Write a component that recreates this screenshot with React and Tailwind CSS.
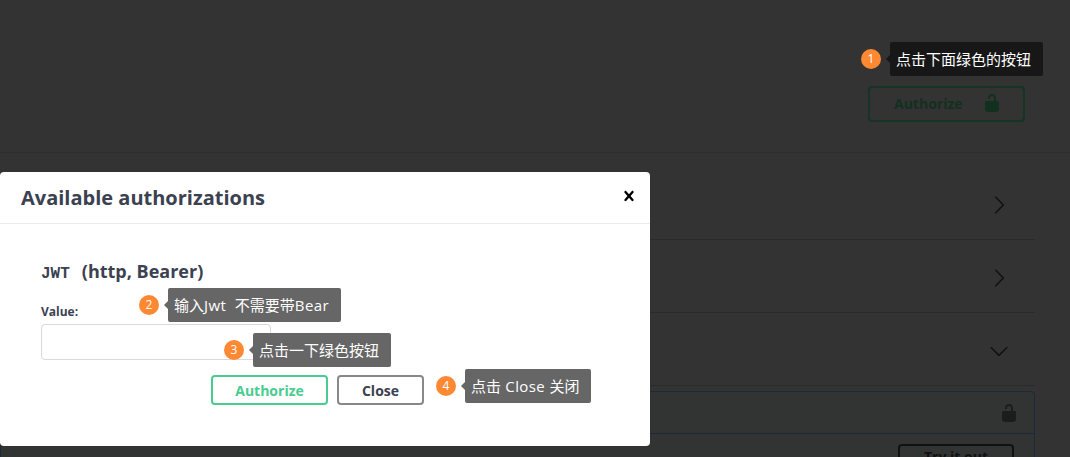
import React from 'react';

const LOCK = 'M15.8 8H14V5.6C14 2.703 12.665 1 10 1 7.334 1 6 2.703 6 5.6V6h2v-.801C8 3.754 8.797 3 10 3c1.203 0 2 .754 2 2.199V8H4c-.553 0-1 .646-1 1.199V17c0 .549.428 1.139.951 1.307l1.197.387C5.672 18.861 6.55 19 7.1 19h5.8c.549 0 1.428-.139 1.951-.307l1.196-.387c.524-.167.953-.757.953-1.306V9.199C17 8.646 16.352 8 15.8 8z';
const ARROW = 'M13.25 10L6.109 2.58c-.268-.27-.268-.707 0-.979.268-.27.701-.27.969 0l7.83 7.908c.268.271.268.709 0 .979l-7.83 7.908c-.268.271-.701.27-.969 0-.268-.269-.268-.707 0-.979L13.25 10z';
const CLOSE = 'M14.348 14.849c-.469.469-1.229.469-1.697 0L10 11.819l-2.651 3.029c-.469.469-1.229.469-1.697 0-.469-.469-.469-1.229 0-1.697l2.758-3.15-2.759-3.152c-.469-.469-.469-1.228 0-1.697.469-.469 1.228-.469 1.697 0L10 8.183l2.651-3.031c.469-.469 1.228-.469 1.697 0 .469.469.469 1.229 0 1.697l-2.758 3.152 2.758 3.15c.469.469.469 1.229 0 1.698z';

const Icon = ({ d, className }) => (
  <svg viewBox="0 0 20 20" className={className} fill="currentColor"><path d={d} /></svg>
);

// numbered hint: orange dot + little arrow + bubble
const Hint = ({ n, children, className, bubble }) => (
  <div className={`absolute flex items-center font-['Open_Sans','Noto_Sans_CJK_SC',sans-serif] ${className}`}>
    <div className="w-5 h-5 rounded-full bg-[#ff8833] text-white text-[12px] flex items-center justify-center">{n}</div>
    <div className={`ml-[5px] w-0 h-0 border-y-[4px] border-y-transparent border-r-[4px] ${bubble === 'dark' ? 'border-r-[#171717]' : 'border-r-[#666666]'}`} />
    <div className={`h-[34px] pl-[6px] pr-[12px] rounded-[2px] text-white text-[15px] flex items-center whitespace-pre ${bubble === 'dark' ? 'bg-[#171717]' : 'bg-[#666666]'}`}>{children}</div>
  </div>
);

const Row = ({ open, className }) => (
  <div className={`border-b border-[#2a2a2a] flex items-center justify-end pr-[26px] ${className}`}>
    <Icon d={ARROW} className={`w-5 h-5 text-[#111111] ${open ? 'rotate-90' : ''}`} />
  </div>
);

export default function App() {
  return (
    <div className="relative w-[1070px] h-[457px] overflow-hidden bg-[#333333] font-['Open_Sans',sans-serif]">
      {/* dimmed page behind the dialog */}
      <div className="h-[153px] border-b border-[#2e2e2e] flex justify-end items-start pt-[86px] pr-[45px]">
        <div className="w-[157px] h-[36px] border-2 border-[#153524] rounded flex items-center pl-[24px] pb-[2px] text-[#12301f] text-[14px] font-bold">
          Authorize
          <Icon d={LOCK} className="w-5 h-5 ml-[19px]" />
        </div>
      </div>
      <div className="mr-[35px]">
        <Row className="h-[87px] pt-[17px]" />
        <Row className="h-[73px] pt-[3px]" />
        <Row open className="h-[73px] pt-[3px]" />
        <div className="mt-[5px] h-[80px] border border-[#1a2a3a] rounded-t bg-[#323434]">
          <div className="h-[42px] border-b border-[#1a2a3a] flex items-center justify-end pr-[15px]">
            <Icon d={LOCK} className="w-5 h-5 text-[#1c1c1c]" />
          </div>
          <div className="flex justify-end pr-[20px] pt-[10px]">
            <div className="w-[116px] h-[30px] border-2 border-[#111111] rounded text-[#111111] text-[14px] font-bold flex justify-center">Try it out</div>
          </div>
        </div>
      </div>

      {/* dialog */}
      <div className="absolute left-0 top-[172px] w-[650px] h-[274px] bg-white rounded">
        <div className="h-[52px] border-b border-[#ebebeb] flex items-center justify-between pl-[21px] pr-[11px]">
          <h3 className="text-[20px] font-bold text-[#3b4151] pt-[1px]">Available authorizations</h3>
          <Icon d={CLOSE} className="w-5 h-5 text-black -mt-[3px]" />
        </div>
        <div className="pl-[41px] pt-[35px]">
          <h4 className="text-[18px] font-bold text-[#3b4151] leading-[24px] flex items-baseline whitespace-pre">
            <code className="font-['Liberation_Mono',monospace] text-[16px] mr-[12px]">JWT</code>(http, Bearer)
          </h4>
          <label className="block mt-[16px] text-[12px] font-bold text-[#3b4151] leading-[20px]">Value:</label>
          <div className="mt-[2px] w-[230px] h-[36px] border border-[#d9d9d9] rounded" />
          <div className="flex gap-[9px] mt-[15px] ml-[170px]">
            <div className="w-[117px] h-[30px] border-2 border-[#49cc90] rounded text-[#49cc90] text-[14px] font-bold flex items-center justify-center">Authorize</div>
            <div className="w-[87px] h-[30px] border-2 border-[#888888] rounded text-[#3b4151] text-[14px] font-bold flex items-center justify-center">Close</div>
          </div>
        </div>
      </div>

      <Hint n="1" bubble="dark" className="left-[861px] top-[42px]">点击下面绿色的按钮</Hint>
      <Hint n="2" className="left-[139px] top-[288px]">
        输入<span className="tracking-[0.4px]">Jwt  </span>不需要带<span className="tracking-[0.4px]">Bear</span>
      </Hint>
      <Hint n="3" className="left-[224px] top-[333px]">点击一下绿色按钮</Hint>
      <Hint n="4" className="left-[436px] top-[369px]">
        点击<span className="tracking-[0.4px]"> Close </span>关闭
      </Hint>
    </div>
  );
}
